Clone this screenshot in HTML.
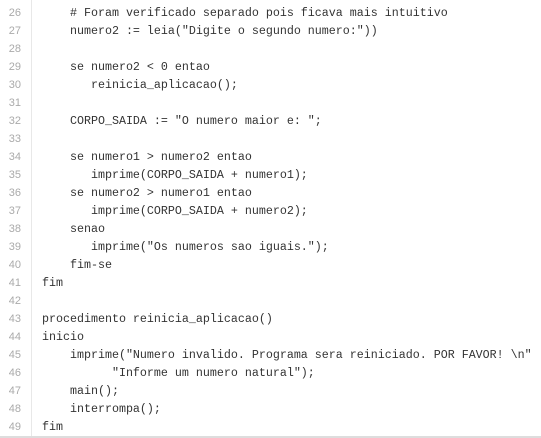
<html><head><style>
body{margin:0;background:#fff;width:541px;height:438px;overflow:hidden;position:relative}
.g{position:absolute;left:0;top:0;width:31px;height:436px;border-right:1px solid #e8e8e8;background:#fff}
.n{position:absolute;left:0;width:21px;text-align:right;font:11px "Liberation Sans",sans-serif;color:#aaa;line-height:18px}
pre{position:absolute;left:42px;top:4px;margin:0;font:11.67px/18px "Liberation Mono",monospace;color:#333}
.b{position:absolute;left:0;top:436px;width:541px;height:2px;background:#ddd}
</style></head><body>
<div class="g"><div class="n" style="top:4px">26<br>27<br>28<br>29<br>30<br>31<br>32<br>33<br>34<br>35<br>36<br>37<br>38<br>39<br>40<br>41<br>42<br>43<br>44<br>45<br>46<br>47<br>48<br>49</div></div>
<pre>    # Foram verificado separado pois ficava mais intuitivo
    numero2 := leia("Digite o segundo numero:"))

    se numero2 &lt; 0 entao
       reinicia_aplicacao();

    CORPO_SAIDA := "O numero maior e: ";

    se numero1 &gt; numero2 entao
       imprime(CORPO_SAIDA + numero1);
    se numero2 &gt; numero1 entao
       imprime(CORPO_SAIDA + numero2);
    senao
       imprime("Os numeros sao iguais.");
    fim-se
fim

procedimento reinicia_aplicacao()
inicio
    imprime("Numero invalido. Programa sera reiniciado. POR FAVOR! \n"
          "Informe um numero natural");
    main();
    interrompa();
fim</pre>
<div class="b"></div>
</body></html>
